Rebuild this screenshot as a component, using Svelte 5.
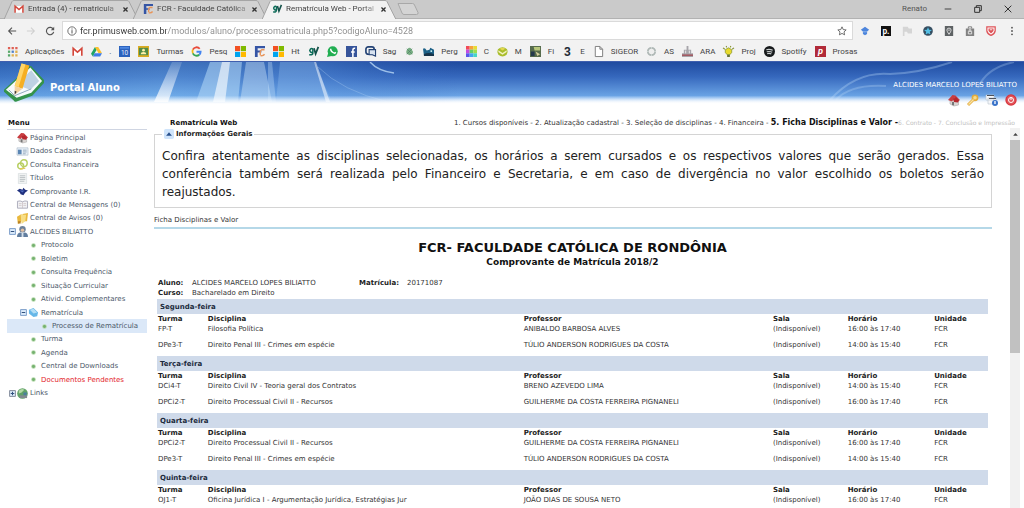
<script>
  const ms = '<path fill="#f25022" d="M0 0h5.6v5.6H0z"/><path fill="#7fba00" d="M6.4 0H12v5.6H6.4z"/><path fill="#00a4ef" d="M0 6.4h5.6V12H0z"/><path fill="#ffb900" d="M6.4 6.4H12V12H6.4z"/>';
  const fcr = '<path fill="#3555a5" d="M1 0h11v2.5H4v2.5h4v2H4v5H1z"/><path fill="none" stroke="#e8955a" stroke-width="1.6" d="M11.5 4.2H8.2Q6.8 4.6 6.8 7v3M7 10.5q3 .6 4.500-1.500"/>';
  const gmail = '<path fill="#fff" d="M1 2.500h10v8H1z"/><path fill="none" stroke="#d4473b" stroke-width="1.800" d="M1.300 10.500V2.600L6 6.700l4.700-4.100v7.900"/>';
  const gv = '<path fill="none" stroke="#0b6b57" stroke-width="1.700" d="M5.300 3.200a2.100 2.100 0 1 0 0 3.500V3v4.500q0 2.700-4 2"/><path fill="none" stroke="#14524a" stroke-width="1.900" d="M6.500 2.500l1.800 6 3-7.500"/>';
  const house = '<path fill="#d9d4d2" stroke="#9c9c9c" stroke-width=".5" d="M2 6l4-3 4.500 3v5L6 12l-4-2z"/><path fill="#c93c40" d="M0 6L4.500 1l3 .4L12 6l-1.400 1L7 3.500 4 7.500z"/><path fill="#b6282f" d="M5 5l3-2 3 3.500-1 2-4-.5z"/><path fill="#777" d="M4 8h2v3.500L4 11z"/>';
  const icons = {
    ms, fcr, gmail, gv, house,
    apps: '<g><path fill="#df6054" d="M1 1h2.500v2.500H1zM5 1h2.500v2.500H5zM9 1h2.500v2.500H9z"/><path fill="#58a869" d="M1 5h2.500v2.500H1z"/><path fill="#5080c8" d="M5 5h2.500v2.500H5z"/><path fill="#e0b050" d="M9 5h2.500v2.500H9zM5 9h2.500v2.500H5zM9 9h2.500v2.500H9z"/><path fill="#58a869" d="M1 9h2.500v2.500H1z"/></g>',
    drive: '<path fill="#21a464" d="M4.300 1L0 8.500 2 11.500 6.200 4z"/><path fill="#fbc02d" d="M4.300 1h3.600L12 8H8.200z"/><path fill="#3f7de8" d="M4 8h8l-2 3.500H2z"/>',
    cal: '<path fill="#2b62bd" d="M0 0h12v12H0z"/><path fill="#4c86df" d="M1 1h10v2H1z"/><text x="6" y="10" font-size="7" text-anchor="middle" fill="#e7efff" font-family="Roboto">10</text>',
    room: '<path fill="#d9ac24" d="M0 0h12v12H0z"/><path fill="#528c48" d="M1 2h10v8H1z"/><circle cx="6" cy="4.500" r="1.500" fill="#fff0a8"/><path fill="#fff0a8" d="M3 9q0-2.500 3-2.500T9 9z"/>',
    google: '<g fill="none" stroke-width="2"><path stroke="#e84a3a" d="M9.500 3A4.500 4.500 0 0 0 2 4"/><path stroke="#f4b912" d="M2 4a4.500 4.500 0 0 0 0 4"/><path stroke="#35a552" d="M2 8a4.500 4.500 0 0 0 7 1.500"/><path stroke="#4384f0" d="M9 9.500A4 4 0 0 0 10.500 6.300H6"/></g>',
    whats: '<circle cx="6.200" cy="5.800" r="5.500" fill="#21ae52"/><path fill="#21ae52" d="M0 12l1.500-5 3.500 4z"/><path fill="none" stroke="#fff" stroke-width="1.600" d="M4 3q0 3.500 4.500 5l1-1.300"/>',
    face: '<path fill="#36549a" d="M0 0h12v12H0z"/><path fill="none" stroke="#fff" stroke-width="1.700" d="M10 2.500Q7.500 2 7.500 5v7M5.500 6.500h4"/>',
    sag: '<rect x="1" y="1" width="9" height="8" rx="2.500" fill="none" stroke="#234274" stroke-width="1.800"/><path fill="#d7e2ef" stroke="#234274" stroke-width="1.200" d="M4.500 4h7v7L8 9.500H4.500z"/>',
    leaf: '<path fill="#78ad82" d="M4 3q2-2 4 0l1 2q2 2-.5 4L6 10 3 8.500Q1.500 6 4 3z"/><path stroke="#4d8066" stroke-width=".7" d="M3 3l6 6M9 3L3 9"/>',
    perg: '<path fill="#1d6187" d="M0 3q2-2 4 2l3-1 1-2 4 2v6H1z"/><path fill="#17344a" d="M1 9q5-3 11 0v2H1z"/><circle cx="9" cy="5.500" r="1" fill="#dff"/>',
    color: '<path fill="#f24a57" d="M0 0h4v4H0z"/><path fill="#f7a13b" d="M4 0h4v4H4z"/><path fill="#e9dc35" d="M8 0h4v4H8z"/><path fill="#c44be0" d="M0 4h4v4H0z"/><path fill="#62cf66" d="M4 4h4v4H4z"/><path fill="#9fdd4e" d="M8 4h4v4H8z"/><path fill="#5b55ec" d="M0 8h4v4H0z"/><path fill="#43a6ef" d="M4 8h4v4H4z"/><path fill="#45d6c4" d="M8 8h4v4H8z"/>',
    cube: '<path fill="#a9bd2c" d="M1 3.500Q6-1 11 3.500q1.500 3-.5 6-4.500 4-9 0-2-3-.5-6z"/><path fill="#f2f1c4" d="M1.500 4.500l4.500 3 4.500-3v2L6 9.500 1.500 6.500z"/><path fill="#e4d64f" d="M3 3q3-2 6 0L6 5z"/>',
    photo: '<path fill="#566b4d" d="M0 0h12v12H0z"/><path fill="#b8c87c" d="M4 1h7v4H5z"/><path fill="#24384c" d="M1 6h4v5H1z"/><path fill="#d5cf9e" d="M6 6l5 3-3 2z"/>',
    three: '<text x="6" y="10.500" font-size="13" font-weight="700" text-anchor="middle" fill="#222b35" font-family="Roboto">3</text>',
    doc: '<path fill="#fff" stroke="#777" d="M2.500.5h5l3 3v8h-8zM7.500.5v3h3"/>',
    ring: '<circle cx="6" cy="6" r="4" fill="#eee" stroke="#aeb7b5" stroke-width="2"/><path stroke="#d2dad8" d="M6 1v2M6 9v2M1 6h2M9 6h2"/>',
    ara: '<path fill="#a7a5aa" d="M5 0h2v4h3v4h2v4H0V8h2V4h3z"/><path stroke="#a34e57" stroke-width="1.500" d="M0 10h12"/><path stroke="#eee" d="M4 5v3M8 5v3"/>',
    bulb: '<path fill="#e8da2c" stroke="#84912d" stroke-width=".8" d="M2.500 4L6 2l3.500 2v3L7.500 9.500h-3L2.500 7z"/><path fill="#65743a" d="M4.500 9.500h3V12h-3z"/><path stroke="#849331" stroke-width="1.200" d="M0 2l2 1.500M12 2l-2 1.500M3.500 0l.5 1.500M8.500 0L8 1.500"/>',
    spotify: '<circle cx="6" cy="6" r="6" fill="#171a1c"/><path fill="none" stroke="#ccd0d0" stroke-width="1.200" d="M2.500 4q4-1 7 .7M3 6.300q3.500-.8 6 .6M3.500 8.300q3-.6 4.500.4"/>',
    prosas: '<path fill="#b12a38" d="M0 0h12v12H0z"/><text x="6" y="9" font-size="10" font-style="italic" font-weight="700" text-anchor="middle" fill="#fff" font-family="Roboto">p</text>',
    diamond: '<path fill="#4d85dc" d="M6 1l5 3.500-2.500 2v3L6 11l-2.500-1.500v-3L1 4.500z"/><path fill="#9ec0f0" d="M3.500 6.500h5v1h-5z"/>',
    pdot: '<path fill="#111" d="M0 0h12v12H0z"/><text x="6" y="9" font-size="10" font-weight="700" text-anchor="middle" fill="#fff" font-family="Roboto">p.</text>',
    flag: '<path fill="#d5d5d5" d="M1 1h6l1 2h4v6H7L6 7H3v5H1z"/>',
    starc: '<circle cx="6" cy="6" r="5.800" fill="#354d60"/><path fill="#55c0e5" d="M6 1.500l1.300 3 3.400.3-2.600 2.200.9 3.300L6 8.600l-3 1.700.9-3.300-2.600-2.200 3.400-.3z"/>',
    pin: '<path fill="#5e6264" d="M1 0h10v12H1z"/><path fill="none" stroke="#eee" d="M6 10Q3.500 6.500 3.500 5a2.500 2.500 0 0 1 5 0Q8.500 6.500 6 10zM6 4v2"/>',
    bag: '<path fill="#818181" d="M1 3h10v9H1z"/><path fill="none" stroke="#818181" stroke-width="1.200" d="M4 3V1h4v2"/><path fill="none" stroke="#eee" d="M4 6.500h4v3H4zM5 6V4.500h2V6"/>',
    shield: '<path fill="#fff" stroke="#dd5257" stroke-width="1.500" d="M1 1h10v5q-1 4-5 5.300Q2 10 1 6z"/><path fill="#dd5257" d="M3 3h6v3L6 9 3 6z"/><path stroke="#fff" d="M4.500 4.500h3"/>',
    card: '<path fill="#eaf1f8" stroke="#aebccc" stroke-width=".7" d="M0 2h12v8H0z"/><path fill="#5b86b4" d="M1 4h4v5H1z"/><path stroke="#93a7bb" d="M6.500 4.500h4M6.500 6.500h4M6.500 8.500h3"/>',
    money: '<g fill="none" stroke="#b7cf62" stroke-width="1.600"><circle cx="7.500" cy="4.500" r="3.600"/><circle cx="4" cy="7.500" r="3.200"/></g><path stroke="#e2c956" stroke-width="1.500" d="M3 11l6-1"/>',
    sheet: '<path fill="#f1f3f3" stroke="#d0d6d8" stroke-width=".6" d="M1.500.5h9v11h-9z"/><path stroke="#a9b1b4" stroke-width=".8" d="M3 3h6M3 5h6M3 7h6M3 9h5"/>',
    receita: '<path fill="#20317f" d="M0 5l3-2 3 1 1-2 2 2 3 1-3 2-2 3-3-1-1-2z"/><path fill="#4f6dc0" d="M3 5h5l-2 2z"/>',
    book: '<path fill="#f2f2f5" stroke="#a9a9b8" d="M.5 2.500Q3.500 1.500 6 3q2.500-1.500 5.500-.5v7.500H.5z"/><path stroke="#c5b9ba" stroke-width=".7" d="M6 3v7M2 5h3M7 5h3M2 7h3M7 7h3"/>',
    notice: '<path fill="#e9b83d" d="M0 4l5-3v8l-4 3zM6 1l6-1-1 9H6z"/><path fill="#f7de86" d="M4 2h6l-1 7-4 3z"/><path fill="#b98124" d="M1 9h3v2.500H1z"/>',
    person: '<circle cx="6" cy="3.500" r="3.500" fill="#6c8199"/><circle cx="6" cy="4.500" r="1.900" fill="#e2bfa2"/><path fill="#627e9f" d="M0 12q0-5 4-5l2 1 2-1q4 0 4 5z"/><path fill="#d5e0ea" d="M5 7.500h2V12H5z"/>',
    book2: '<path fill="#66b7e8" d="M1 3l5-2 5 5-1 4-4 1-5-4z"/><path fill="#b4def5" d="M2 3l4-1 4 4-4 1z"/>',
    globe: '<circle cx="6" cy="6" r="5.800" fill="#60a267"/><path fill="#b4d9a8" d="M2 3q3-3 6-1L5 5 2 6z"/><path fill="#4a7e9e" d="M7 5l4 0-1 4-3-1z"/><path fill="#808a90" d="M3 8h8v3H3z"/>',
    key: '<circle cx="8" cy="3.800" r="2.600" fill="#f8dc8a" stroke="#e3ac3d" stroke-width="1.600"/><path stroke="#e5b046" stroke-width="3" d="M6.500 5.500L1 11"/><path stroke="#f9e2a0" stroke-width="1.200" d="M6.500 5.500L1.500 10.500"/>',
    windows: '<path fill="#f5f7fa" stroke="#b9c3cf" stroke-width=".6" d="M0 1h8v5H0zM2 4h8v6H2z"/><path stroke="#4e535c" stroke-width="1.200" d="M1 1.500h7M3 4.500h7"/><circle cx="9" cy="9" r="3" fill="#3872c9"/><path stroke="#fff" stroke-width="1.300" d="M9 7v3"/>',
    power: '<circle cx="6" cy="6" r="5.700" fill="#d8343d"/><circle cx="6" cy="6" r="4.500" fill="#e2555a"/><circle cx="6" cy="6" r="2.500" fill="none" stroke="#fff"/><path stroke="#fff" d="M6 3v3"/>',
    back: '<path fill="none" stroke="#555" stroke-width="1.300" d="M11 6H2M6 2L2 6l4 4"/>',
    fwd: '<path fill="none" stroke="#d0d0d0" stroke-width="1.300" d="M1 6h9M6 2l4 4-4 4"/>',
    reload: '<path fill="none" stroke="#555" stroke-width="1.400" d="M10 4a4.400 4.400 0 1 0 .4 3"/><path fill="#555" d="M11 1v4H7z"/>',
    info: '<circle cx="6" cy="6" r="5" fill="none" stroke="#555"/><path stroke="#555" stroke-width="1.200" d="M6 5v4M6 3v1.200"/>',
    star: '<path fill="none" stroke="#555" d="M6 1l1.500 3.300 3.500.4-2.600 2.400.7 3.500L6 8.900l-3.100 1.700.7-3.500L1 4.700l3.500-.4z"/>',
    dots: '<g fill="#555"><circle cx="6" cy="2" r="1.100"/><circle cx="6" cy="6" r="1.100"/><circle cx="6" cy="10" r="1.100"/></g>',
    min: '<path stroke="#444" stroke-width="1.200" d="M2 6h8"/>',
    max: '<path fill="none" stroke="#333" stroke-width="1.200" d="M2 4h6v6H2zM4 4V2h6v6H8"/>',
    close: '<path stroke="#333" stroke-width="1.200" d="M2 2l8 8M10 2l-8 8"/>',
    x: '<path stroke="#333" stroke-width="2.200" d="M2.500 2.500l7 7M9.500 2.500l-7 7"/>',
    minus: '<path fill="#dcebfa" stroke="#6f93c4" stroke-width="1.500" d="M1 1h10v10H1z"/><path stroke="#31517e" stroke-width="1.800" d="M3 6h6"/>',
    plus: '<path fill="#dcebfa" stroke="#777f90" stroke-width="1.500" d="M1 1h10v10H1z"/><path stroke="#31517e" stroke-width="1.800" d="M3 6h6M6 3v6"/>',
    up: '<rect width="12" height="12" rx="2" fill="#cfe4fb"/><path fill="#274f8c" d="M2.500 8L6 4l3.500 4z"/>',
    bullet: '<circle cx="6" cy="6" r="5.500" fill="#b3d8a8"/><circle cx="6" cy="6" r="3.500" fill="#74b070"/>',
    arrow: '<path fill="#444" d="M2 8l4-4.500L10 8z"/>'
  };

  const tabs = [
    { icon: 'gmail', text: 'Entrada (4) - rematricula' },
    { icon: 'fcr', text: 'FCR - Faculdade Católica' },
    { icon: 'gv', text: 'Rematrícula Web - Portal', active: true }
  ];
  const bookmarks = [
    ['apps', 'Aplicações'], ['gmail'], ['drive', '.'], ['cal'], ['room', 'Turmas'], ['google', 'Pesq'],
    ['ms'], ['fcr'], ['ms', 'Ht'], ['gv'], ['whats'], ['face'], ['sag', 'Sag'], ['leaf'], ['perg', 'Perg'],
    ['color', 'C'], ['cube', 'M'], ['photo', 'Fi'], ['three', 'E'], ['doc', 'SIGEOR'], ['ring', 'AS'],
    ['ara', 'ARA'], ['bulb', 'Proj'], ['spotify', 'Spotify'], ['prosas', 'Prosas']
  ];
  const extensions = ['diamond', 'pdot', 'flag', 'starc', 'pin', 'bag', 'shield', 'dots'];
  const menu = [
    { icon: 'house', text: 'Página Principal' },
    { icon: 'card', text: 'Dados Cadastrais' },
    { icon: 'money', text: 'Consulta Financeira' },
    { icon: 'sheet', text: 'Títulos' },
    { icon: 'receita', text: 'Comprovante I.R.' },
    { icon: 'book', text: 'Central de Mensagens (0)' },
    { icon: 'notice', text: 'Central de Avisos (0)' },
    { icon: 'person', text: 'ALCIDES BILIATTO', toggle: 'minus' },
    { icon: 'bullet', text: 'Protocolo', level: 1 },
    { icon: 'bullet', text: 'Boletim', level: 1 },
    { icon: 'bullet', text: 'Consulta Frequência', level: 1 },
    { icon: 'bullet', text: 'Situação Curricular', level: 1 },
    { icon: 'bullet', text: 'Ativid. Complementares', level: 1 },
    { icon: 'book2', text: 'Rematrícula', level: 1, toggle: 'minus' },
    { icon: 'bullet', text: 'Processo de Rematrícula', level: 2, current: true },
    { icon: 'bullet', text: 'Turma', level: 1 },
    { icon: 'bullet', text: 'Agenda', level: 1 },
    { icon: 'bullet', text: 'Central de Downloads', level: 1 },
    { icon: 'bullet', text: 'Documentos Pendentes', level: 1, alert: true },
    { icon: 'globe', text: 'Links', toggle: 'plus' }
  ];
  const tulio = ['DPe3-T', 'Direito Penal III - Crimes em espécie', 'TÚLIO ANDERSON RODRIGUES DA COSTA', '14:00 às 15:40'];
  const guilherme = ['DPCi2-T', 'Direito Processual Civil II - Recursos', 'GUILHERME DA COSTA FERREIRA PIGNANELI', '16:00 às 17:40'];
  const days = [
    { name: 'Segunda-feira', rows: [['FP-T', 'Filosofia Política', 'ANIBALDO BARBOSA ALVES', '16:00 às 17:40'], tulio] },
    { name: 'Terça-feira', rows: [['DCi4-T', 'Direito Civil IV - Teoria geral dos Contratos', 'BRENO AZEVEDO LIMA', '14:00 às 15:40'], guilherme] },
    { name: 'Quarta-feira', rows: [guilherme, tulio] },
    { name: 'Quinta-feira', rows: [['OJ1-T', 'Oficina Jurídica I - Argumentação Jurídica, Estratégias Jur', 'JOÃO DIAS DE SOUSA NETO', '16:00 às 17:40']] }
  ];
  let url = $state('fcr.primusweb.com.br/modulos/aluno/processomatricula.php5?codigoAluno=4528');
</script>

{#snippet icon(name, size = 'm')}
  <svg class="icon {size}" viewBox="0 0 12 12" aria-hidden="true">{@html icons[name]}</svg>
{/snippet}

<div class="window">
  <div class="chrome">
    <div class="tabstrip">
      {#each tabs as tab}
        <div class="tab" class:active={tab.active}>
          <svg class="shape" viewBox="0 0 134 18" preserveAspectRatio="none" aria-hidden="true">
            <path d="M0 18.500L8 1.500Q8.500.5 10 .5H123Q124.500.5 125 1.500L134 18.500" vector-effect="non-scaling-stroke" />
          </svg>
          {@render icon(tab.icon, 's')}
          <button class="label">{tab.text}</button>
          <button class="plain" aria-label="Fechar guia">{@render icon('x', 'xs')}</button>
        </div>
      {/each}
      <button class="plain newtab" aria-label="Nova guia">
        <svg viewBox="0 0 22 12"><path d="M1 .5h14.500q1.500 0 2 1.500L21 9.500q.5 2-1.500 2H7q-1.500 0-2-1.500z" fill="#d4d4d4" stroke="#a8a8a8" /></svg>
      </button>
      <div class="controls">
        <span class="user">Renato</span>
        <button class="plain" aria-label="Minimizar">{@render icon('min', 's')}</button>
        <button class="plain" aria-label="Restaurar">{@render icon('max', 's')}</button>
        <button class="plain" aria-label="Fechar">{@render icon('close', 's')}</button>
      </div>
    </div>

    <div class="toolbar">
      <div class="nav">
        <button class="plain" aria-label="Voltar">{@render icon('back', 's')}</button>
        <button class="plain" aria-label="Avançar">{@render icon('fwd', 's')}</button>
        <button class="plain" aria-label="Recarregar">{@render icon('reload', 's')}</button>
      </div>
      <div class="omnibox">
        {@render icon('info', 's')}
        <input type="text" aria-label="Endereço" bind:value={url} />
        <button class="plain" aria-label="Adicionar aos favoritos">{@render icon('star', 's')}</button>
      </div>
      <div class="extensions">
        {#each extensions as name}
          <button class="plain" aria-label={name}>{@render icon(name, 's')}</button>
        {/each}
      </div>
    </div>

    <nav class="bookmarks">
      {#each bookmarks as [name, text]}
        <a href="#top" aria-label={text ?? name}>{@render icon(name, 'b')}{#if text}<span>{text}</span>{/if}</a>
      {/each}
    </nav>
  </div>

  <header class="banner">
    <svg class="art" viewBox="0 0 1024 42" preserveAspectRatio="none" aria-hidden="true">
      <defs>
        <linearGradient id="sky" x2="0" y2="1">
          <stop offset="0" stop-color="#204b9f" /><stop offset=".35" stop-color="#3668bd" />
          <stop offset=".8" stop-color="#69a2e4" /><stop offset=".86" stop-color="#8abaf0" /><stop offset="1" stop-color="#fff" />
        </linearGradient>
        <linearGradient id="glow">
          <stop offset="0" stop-color="#4f96dc" stop-opacity=".3" /><stop offset=".35" stop-color="#78b9ee" stop-opacity=".35" />
          <stop offset=".7" stop-color="#5b96de" stop-opacity=".35" /><stop offset="1" stop-color="#3668bd" stop-opacity="0" />
        </linearGradient>
        <linearGradient id="ray" x2="0" y2="1">
          <stop offset="0" stop-color="#fff" stop-opacity=".15" /><stop offset="1" stop-color="#fff" stop-opacity=".8" />
        </linearGradient>
        <linearGradient id="fade" x2="0" y2="1">
          <stop offset=".8" stop-color="#fff" stop-opacity="0" /><stop offset="1" stop-color="#fff" />
        </linearGradient>
      </defs>
      <path fill="url(#sky)" d="M0 0h1024v42H0z" />
      <path fill="url(#glow)" d="M0 0h460v42H0z" />
      <path fill="url(#ray)" d="M172 0h10L168 40h-14z" />
      <path fill="#b5d8f6" opacity=".55" d="M210 0h32l-4 40h-42z" />
      <path fill="#fff" opacity=".6" d="M222 0h8l-5 40h-12z" />
      <path fill="#d8ecfb" opacity=".4" d="M246 0h18l8 40h-32z" />
      <path fill="#c9e2f8" opacity=".35" d="M268 0h4l4 40h-8z" />
      <path fill="#9cc8f2" opacity=".3" d="M280 0h34l18 40h-56z" />
      <path fill="#fff" opacity=".5" d="M314 0h2l14 40h-4z" />
      <g fill="none" stroke="#b8d7f5">
        <path opacity=".8" stroke-width="1.500" d="M370 0q8 9 24 11" />
        <path opacity=".3" d="M318 5q24 24 70 35" />
        <path opacity=".35" stroke-width="2" d="M830 38q26-29 60-26 30-1 62-12" />
        <path opacity=".3" stroke-width="2" d="M836 38q14-16 50-14M978 26q8-20 36-26" />
      </g>
      <path fill="url(#fade)" d="M0 0h1024v42H0z" />
    </svg>
    <div class="brand">
      <svg viewBox="0 0 42 42" aria-hidden="true">
        <path fill="#34934b" d="M1 28L27 4q2-1 3 1l12 13q1 2-1 4L30 34 14 40q-2 1-3-1L1 30z" />
        <path fill="#f6fafc" d="M3 28L28 5l12 14-11 12-15 5z" />
        <path fill="#bfd2e3" d="M18 18l11-10 8 11-9 9-11-4z" />
        <path fill="none" stroke="#8fa9bd" d="M6 28l6 6 17-7" />
        <path fill="#f5af22" d="M19 1l8 2-7 24-8-3z" />
        <path fill="#ffd569" d="M19 1l4 1-7 23-4-1z" />
        <path fill="#f2d2a0" d="M12 24l8 3-8 6z" /><path fill="#333" d="M12 29l2 1-2 3z" />
      </svg>
      <strong>Portal Aluno</strong>
    </div>
    <div class="account">
      <span>ALCIDES MARCELO LOPES BILIATTO</span>
      <div class="actions">
        <button class="plain" aria-label="Página Principal">{@render icon('house')}</button>
        <button class="plain" aria-label="Senha">{@render icon('key')}</button>
        <button class="plain" aria-label="Janelas">{@render icon('windows')}</button>
        <button class="plain" aria-label="Sair">{@render icon('power')}</button>
      </div>
    </div>
  </header>

  <div class="body">
    <aside>
      <h2>Menu</h2>
      <ul>
        {#each menu as item}
          <li class="level{item.level ?? 0}" class:current={item.current} class:alert={item.alert}>
            <span class="toggle">{#if item.toggle}{@render icon(item.toggle, 'xs')}{/if}</span>
            <span class="pic">{@render icon(item.icon, item.icon === 'bullet' ? 'dot' : 'b')}</span>
            <a href="#top">{item.text}</a>
          </li>
        {/each}
      </ul>
    </aside>

    <div class="content">
      <div class="steps">
        <h1>Rematrícula Web</h1>
        <p>1. Cursos disponíveis - 2. Atualização cadastral - 3. Seleção de disciplinas - 4. Financeira - <b>5. Ficha Disciplinas e Valor - </b><small>6. Contrato - 7. Conclusão e Impressão</small></p>
      </div>
      <div class="pane">
        <main>
          <fieldset>
            <legend><button class="plain" aria-label="Recolher">{@render icon('up', 's')}</button>Informações Gerais</legend>
            <p>Confira atentamente as disciplinas selecionadas, os horários a serem cursados e os respectivos valores que serão gerados. Essa conferência também será realizada pelo Financeiro e Secretaria, e em caso de divergência no valor escolhido os boletos serão reajustados.</p>
          </fieldset>
          <h3>Ficha Disciplinas e Valor</h3>
          <section>
            <h4>FCR- FACULDADE CATÓLICA DE RONDÔNIA</h4>
            <h5>Comprovante de Matrícula 2018/2</h5>
            <dl>
              <dt>Aluno:</dt><dd>ALCIDES MARCELO LOPES BILIATTO</dd>
              <dt>Matrícula:</dt><dd>20171087</dd>
              <dt>Curso:</dt><dd>Bacharelado em Direito</dd>
            </dl>
            <table>
              <colgroup><col class="c1" /><col class="c2" /><col class="c3" /><col class="c4" /><col class="c5" /><col /></colgroup>
              {#each days as day}
                <tbody>
                  <tr class="day"><th colspan="6">{day.name}</th></tr>
                  <tr><th>Turma</th><th>Disciplina</th><th>Professor</th><th>Sala</th><th>Horário</th><th>Unidade</th></tr>
                  {#each day.rows as [code, subject, teacher, time]}
                    <tr><td>{code}</td><td>{subject}</td><td>{teacher}</td><td>(Indisponível)</td><td>{time}</td><td>FCR</td></tr>
                  {/each}
                </tbody>
              {/each}
            </table>
          </section>
        </main>
        <div class="scrollbar">
          <button class="plain" aria-label="Rolar para cima">{@render icon('arrow', 'xs')}</button>
          <div class="thumb"></div>
        </div>
      </div>
    </div>
  </div>
</div>

<style>
  :global(body) { background: #fff; overflow: hidden; }
  * { box-sizing: border-box; }
  .window { display: flex; flex-direction: column; height: 100vh; overflow: hidden; font: 7px/10px "DejaVu Sans", sans-serif; color: #333; }
  h1, h2, h3, h4, h5, p, ul, dl, dd { margin: 0; padding: 0; }
  a { color: inherit; text-decoration: none; }
  button { font: inherit; color: inherit; border: 0; background: none; padding: 0; }
  .plain { display: flex; align-items: center; justify-content: center; flex: none; }
  .icon { display: block; flex: none; width: 12px; height: 12px; overflow: visible; }
  .icon.b { width: 11px; height: 11px; }
  .icon.s { width: 10px; height: 10px; }
  .icon.xs { width: 7px; height: 7px; }
  .icon.dot { width: 5px; height: 5px; }

  .chrome { flex: none; font: 8px/12px Roboto, sans-serif; color: #444; background: #f2f2f2; border-bottom: 1px solid #3f5fae; }
  .tabstrip { display: flex; align-items: center; height: 19px; padding-left: 4px; background: #cacaca; border-bottom: 1px solid #b2b2b2; }
  .tab { position: relative; display: flex; align-items: center; gap: 4px; width: 134px; height: 19px; margin-right: -5px; padding: 0 9px 0 10px; }
  .tab.active { z-index: 1; }
  .tab > * { position: relative; }
  .tab .shape { position: absolute; inset: 0; width: 100%; height: 100%; }
  .shape path { fill: #d2d2d2; stroke: #a4a4a4; }
  .active .shape path { fill: #f2f2f2; }
  .label { flex: 1; min-width: 0; white-space: nowrap; text-align: left; mask-image: linear-gradient(90deg, #000 85%, rgb(0 0 0 / .3)); }
  .newtab { margin-left: 6px; }
  .newtab svg { width: 22px; height: 12px; }
  .controls { display: flex; align-items: center; gap: 20px; margin-left: auto; padding-right: 11px; }
  .user { font-size: 8px; color: #555; margin-right: -4px; }

  .toolbar { display: flex; align-items: center; height: 23px; gap: 7px; padding: 0 7px; }
  .nav { display: flex; gap: 9px; }
  .omnibox { display: flex; flex: 1; align-items: center; gap: 3px; height: 19px; padding: 0 5px 0 4px; background: #fff; border: 1px solid #dadada; }
  .omnibox input { flex: 1; min-width: 0; border: 0; padding: 0; outline: 0; font: 9px/16px Roboto, sans-serif; color: transparent; background: linear-gradient(90deg, #333 86px, #8b8b8b 86px); background-clip: text; }
  .extensions { display: flex; gap: 11px; }
  .bookmarks { display: flex; align-items: center; height: 19px; padding: 0 7px; gap: 8px; overflow: hidden; }
  .bookmarks a { display: flex; align-items: center; gap: 7px; }

  .banner { position: relative; display: flex; justify-content: space-between; flex: none; height: 50px; }
  .art { position: absolute; top: 0; left: 0; width: 100%; height: 42px; }
  .brand, .account { position: relative; display: flex; color: #fff; }
  .brand { align-items: center; gap: 6px; padding: 0 0 9px 3px; }
  .brand svg { width: 41px; height: 42px; }
  .brand strong { font-size: 10px; line-height: 12px; padding-top: 11px; }
  .account { flex-direction: column; align-items: flex-end; gap: 4px; padding: 18px 7px 0 0; }
  .actions { display: flex; gap: 7px; }

  .body { display: flex; flex: 1; min-height: 0; }
  aside { flex: none; width: 154px; padding: 6px 7px 0; }
  h1, h2 { font-size: 7px; line-height: 10px; color: #111; }
  h2 { padding: 0 1px 1px; border-bottom: 1px solid #cfd5e2; }
  ul { display: grid; grid-auto-rows: 1fr; min-height: 269px; margin-top: 1px; list-style: none; color: #4b5869; }
  li { display: flex; align-items: center; }
  li.level1 { padding-left: 11px; }
  li.level2 { padding-left: 22px; }
  .toggle { width: 9px; padding-left: 2px; }
  .pic { display: flex; justify-content: center; width: 12px; }
  li a { padding-left: 2px; white-space: nowrap; }
  .current { background: #dbe8f8; }
  .alert { color: #e3262b; }

  .content { display: flex; flex: 1; flex-direction: column; min-width: 0; }
  .steps { display: flex; flex: none; justify-content: space-between; align-items: center; height: 16px; padding: 6px 9px 0 16px; white-space: nowrap; }
  .steps b { font-size: 8px; color: #111; white-space: pre; }
  .steps small { font-size: 6px; color: #c2c2c2; }
  .pane { display: flex; flex: 1; gap: 18px; min-height: 0; padding-right: 4px; }
  main { flex: 1; min-width: 0; overflow: hidden; }
  fieldset { margin: 0; padding: 7px 7px 6px; border: 1px solid #d4d4d4; }
  legend { display: flex; align-items: center; gap: 2px; padding: 0 2px; line-height: 12px; font-weight: 700; color: #222; }
  fieldset p { font-size: 12px; line-height: 18px; text-align: justify; color: #222; }
  h3 { padding: 7px 0 2px; font-size: 7px; font-weight: 400; border-bottom: 2px solid #b5d8e8; }
  section { padding: 11px 4px 0 3px; }
  h4 { font-size: 13px; line-height: 16px; text-align: center; color: #111; }
  h5 { font-size: 9px; line-height: 12px; text-align: center; color: #111; }
  dl { display: grid; grid-template-columns: 34px 167px 48px 1fr; margin: 10px 0 1px; padding-left: 1px; }
  dt { font-weight: 700; color: #222; }
  table { width: 100%; table-layout: fixed; border-collapse: collapse; }
  .c1 { width: 6%; } .c2 { width: 38%; } .c3 { width: 30%; } .c4 { width: 9%; } .c5 { width: 10.4%; }
  th, td { padding: 0 0 0 1px; text-align: left; vertical-align: top; white-space: nowrap; }
  th { color: #222; }
  td { padding-bottom: 6px; }
  .day th { padding: 3px 0 2px 3px; background: #cfdaea; color: #1c2a3c; }
  .scrollbar { display: flex; flex: none; flex-direction: column; width: 10px; background: #f1f1f1; }
  .scrollbar button { height: 12px; }
  .thumb { height: 56%; background: #c1c1c1; }
</style>
